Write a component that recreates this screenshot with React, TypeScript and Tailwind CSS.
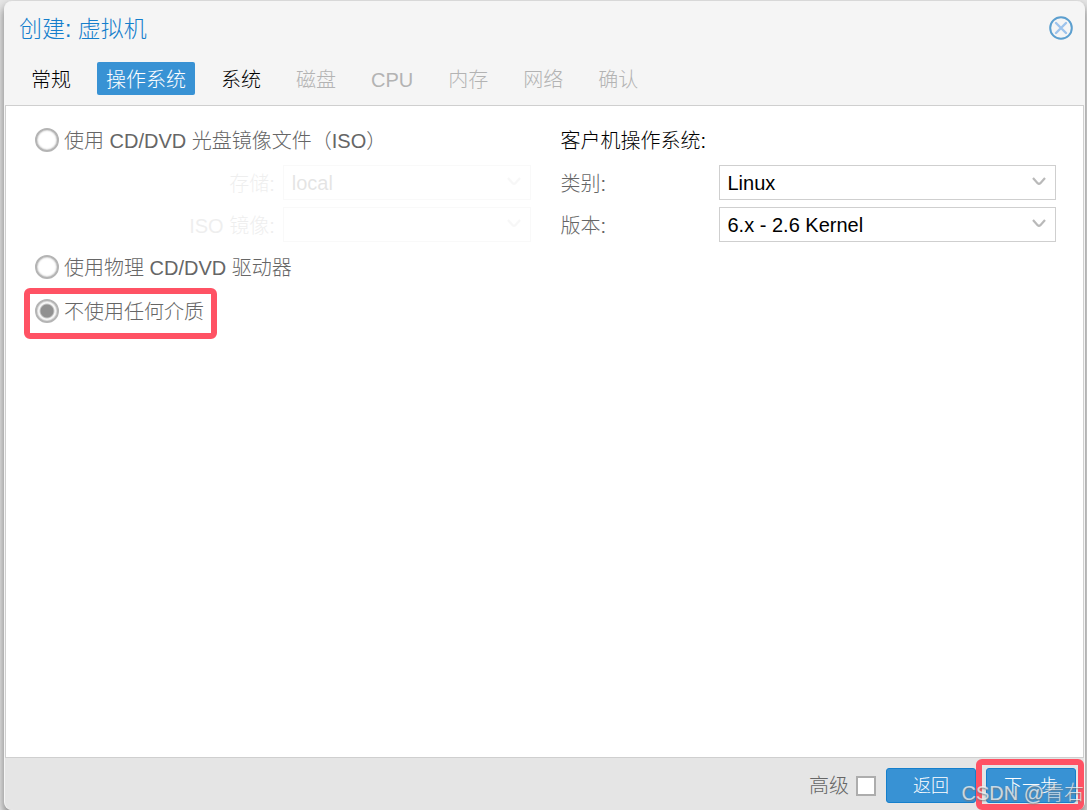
import type { ReactNode } from 'react'

interface Tab {
  label: string
  state: 'normal' | 'active' | 'disabled'
}

const tabs: Tab[] = [
  { label: '常规', state: 'normal' },
  { label: '操作系统', state: 'active' },
  { label: '系统', state: 'normal' },
  { label: '磁盘', state: 'disabled' },
  { label: 'CPU', state: 'disabled' },
  { label: '内存', state: 'disabled' },
  { label: '网络', state: 'disabled' },
  { label: '确认', state: 'disabled' },
]

const tabStyles = {
  normal: 'text-black',
  active: 'bg-[#3892d4] text-white',
  disabled: 'text-[#b3b3b3]',
}

function SelectBox({ id, options, disabled }: { id: string; options: string[]; disabled?: boolean }) {
  return (
    <div className="relative flex-1">
      <select
        id={id}
        disabled={disabled}
        className="block h-[35px] w-full appearance-none border border-[#cfcfcf] bg-white px-2 text-black"
      >
        {options.map(o => (
          <option key={o}>{o}</option>
        ))}
      </select>
      <svg
        className="pointer-events-none absolute top-3 right-[10px]"
        width="14"
        height="9"
        viewBox="0 0 14 9"
        fill="none"
        stroke="#b9b9b9"
        strokeWidth="2.2"
      >
        <path d="M1 1 L5.6 6.2 Q7 7.4 8.4 6.2 L13 1" />
      </svg>
    </div>
  )
}

function MediaRadio({ label, checked, children }: { label: string; checked?: boolean; children?: ReactNode }) {
  return (
    <label className="relative flex h-9 items-center gap-[5px] text-[#666]">
      <input
        type="radio"
        name="media"
        defaultChecked={checked}
        className="size-6 appearance-none rounded-full border-2 border-[#b4b4b4] bg-white shadow-[inset_0_0_2px_#999] checked:bg-[radial-gradient(circle,#919191_0_6px,#fff_8px)]"
      />
      <span className="pt-0.5">{label}</span>
      {children}
    </label>
  )
}

export default function App() {
  return (
    <div className="min-h-screen bg-[#e6e6e6] pt-px pr-0.5 pl-1 text-[20px] leading-6 font-light font-['Liberation_Sans','Noto_Sans_CJK_SC',sans-serif]">
      <div className="flex min-h-[calc(100vh-1px)] flex-col rounded-lg border-x border-[#f5f5f5] bg-[#f5f5f5] shadow-[0_5px_8px_1px_#888]">
        <header className="flex h-[54px] items-center justify-between pr-[11px] pl-[14px]">
          <h1 className="pt-0.5 text-[23px] text-[#157fcc]">创建: 虚拟机</h1>
          <button aria-label="关闭" className="size-6">
            <svg width="24" height="24" viewBox="0 0 24 24" fill="none">
              <circle cx="12" cy="12" r="10.8" stroke="#5c9fcf" strokeWidth="2" />
              <path d="M7 7 L17 17 M17 7 L7 17" stroke="#9dc3ec" strokeWidth="2.4" strokeLinecap="round" />
            </svg>
          </button>
        </header>

        <nav className="flex h-[50px] items-start gap-[17px] pt-[7px] pl-[17px]">
          {tabs.map(tab => (
            <button
              key={tab.label}
              disabled={tab.state === 'disabled'}
              className={`h-[33px] rounded-[2px] px-[9px] pt-0.5 ${tabStyles[tab.state]}`}
            >
              {tab.label}
            </button>
          ))}
        </nav>

        <main className="grid flex-1 grid-cols-2 content-start gap-[30px] border border-[#cfcfcf] bg-white pt-4 pr-[27px] pl-[29px]">
          <section className="flex flex-col gap-[7px]">
            <MediaRadio label="使用 CD/DVD 光盘镜像文件（ISO）" />
            <div className="flex items-center opacity-10">
              <label htmlFor="storage" className="w-1/2 pt-0.5 pr-2 text-right text-[#666]">存储:</label>
              <SelectBox id="storage" options={['local']} disabled />
            </div>
            <div className="flex items-center opacity-10">
              <label htmlFor="iso" className="w-1/2 pt-0.5 pr-2 text-right text-[#666]">ISO 镜像:</label>
              <SelectBox id="iso" options={['']} disabled />
            </div>
            <div className="flex flex-col gap-2">
              <MediaRadio label="使用物理 CD/DVD 驱动器" />
              <MediaRadio label="不使用任何介质" checked>
                <span className="pointer-events-none absolute -top-[5px] -left-[11px] h-[51px] w-[193px] rounded-md border-6 border-[#ff5264]" />
              </MediaRadio>
            </div>
          </section>

          <section className="flex flex-col gap-[7px]">
            <h2 className="flex h-9 items-center pt-0.5 text-black">客户机操作系统:</h2>
            <div className="flex items-center">
              <label htmlFor="os-type" className="w-[158px] pt-0.5 text-[#666]">类别:</label>
              <SelectBox id="os-type" options={['Linux']} />
            </div>
            <div className="flex items-center">
              <label htmlFor="os-version" className="w-[158px] pt-0.5 text-[#666]">版本:</label>
              <SelectBox id="os-version" options={['6.x - 2.6 Kernel']} />
            </div>
          </section>
        </main>

        <footer className="relative flex h-[52px] items-start justify-end gap-[10px] rounded-b-lg bg-[#e5e5e5] pt-[10px] pr-2">
          <label className="flex h-[35px] items-center gap-[7px] text-[#666]">
            高级
            <input type="checkbox" className="size-5 appearance-none border-2 border-[#adadad] bg-white" />
          </label>
          <button className="h-[35px] w-[90px] rounded-[3px] border border-[#157fcc] bg-[#3892d4] text-[18px] text-white">
            返回
          </button>
          <div className="relative">
            <button className="h-[35px] w-[90px] rounded-[3px] border border-[#157fcc] bg-[#3892d4] text-[18px] text-white">
              下一步
            </button>
            <span className="pointer-events-none absolute -top-[9px] -right-2 h-[51px] w-[108px] rounded-md border-6 border-[#ff5264]" />
          </div>
          <span className="pointer-events-none absolute right-0 bottom-[5px] text-[20px] whitespace-nowrap text-white/70 [text-shadow:0_1px_2px_#777]">
            CSDN @青右
          </span>
        </footer>
      </div>
    </div>
  )
}
